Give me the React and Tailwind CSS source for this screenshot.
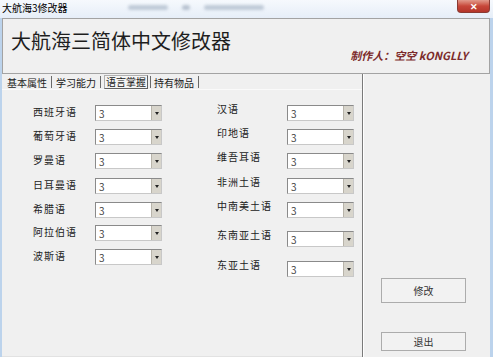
import React from 'react';

const LEFT = [
  { label: '西班牙语', mt: 15 },
  { label: '葡萄牙语', mt: 8 },
  { label: '罗曼语', mt: 8 },
  { label: '日耳曼语', mt: 9 },
  { label: '希腊语', mt: 8 },
  { label: '阿拉伯语', mt: 7 },
  { label: '波斯语', mt: 8 },
];

const RIGHT = [
  { label: '汉语', mt: 15 },
  { label: '印地语', mt: 8 },
  { label: '维吾耳语', mt: 8 },
  { label: '非洲土语', mt: 9 },
  { label: '中南美土语', mt: 8 },
  { label: '东南亚土语', mt: 13 },
  { label: '东亚土语', mt: 14 },
];

const TABS = ['基本属性', '学习能力', '语言掌握', '持有物品'];

const font = { fontFamily: '"Noto Sans CJK SC", "Liberation Sans", sans-serif' };

function Combo() {
  return (
    <div className="w-[67px] h-[16px] flex border border-t-[#8a8a8a] border-l-[#8a8a8a] border-r-[#c8c8c8] border-b-[#c8c8c8] bg-white">
      <div className="flex-1 pl-[3px] text-[10px] leading-[15px] text-[#444]">3</div>
      <div className="w-[10px] h-full bg-[#d8d5cc] border-l border-[#b8b4aa] flex items-center justify-center">
        <div className="w-0 h-0 border-l-[2px] border-r-[2px] border-t-[3px] border-l-transparent border-r-transparent border-t-[#222]" />
      </div>
    </div>
  );
}

function Row({ label, mt, labelW, up }) {
  return (
    <div className="flex items-start" style={{ marginTop: mt }}>
      <div className={`${labelW} text-[10px] leading-[12px] text-[#222] tracking-[1px]`} style={{ marginTop: up }}>{label}</div>
      <Combo />
    </div>
  );
}

export default function App() {
  return (
    <div className="w-[493px] h-[357px] overflow-hidden bg-[#bcd3ec] flex flex-col" style={font}>
      {/* title bar */}
      <div className="h-[18px] flex-none relative bg-gradient-to-b from-[#f6f9fd] to-[#e6eef8] flex items-start">
        <div className="pl-[2px] pt-[2px] text-[10px] leading-[12px] text-black">大航海3修改器</div>
        <div className="ml-[60px] mt-[5px] flex gap-[14px] blur-[1.5px] opacity-50">
          <div className="w-[40px] h-[5px] bg-[#8fa0b4] rounded" />
          <div className="w-[8px] h-[5px] bg-[#7f8fa4] rounded" />
          <div className="w-[60px] h-[5px] bg-[#8fa0b4] rounded" />
        </div>
        <div className="absolute right-[3px] top-0 w-[33px] h-[13px] rounded-b-[4px] bg-gradient-to-b from-[#e19a8c] via-[#c7473a] to-[#b4352a] border border-t-0 border-[#8a3a33] flex items-center justify-center text-white text-[9px] leading-[9px] font-bold">✕</div>
      </div>

      <div className="flex-1 flex flex-col ml-[2px] mr-[3px] bg-[#f0f0f0]">
        {/* header */}
        <div className="h-[56px] flex-none border border-[#a3a3a3] bg-[#f0f0f0] flex flex-col">
          <div className="pl-[8px] pt-[10px] text-[20px] leading-[24px] text-[#1e1e1e]">大航海三简体中文修改器</div>
          <div className="self-end pr-[21px] -mt-[4px] text-[11px] leading-[12px] font-bold italic text-[#7c2b2b]">制作人：空空 kONGLLY</div>
        </div>

        <div className="flex-1 flex">
          {/* tab area */}
          <div className="w-[360px] flex flex-col">
            <div className="h-[15px] flex items-end pl-[4px]">
              {TABS.map((t, i) => (
                <div key={t} className="flex items-end h-full">
                  {i === 2 ? (
                    <div className="h-[14px] px-[1px] mt-[1px] border border-t-[#b0b0b0] border-l-[#b0b0b0] border-r-[#606060] border-b-[#606060] bg-[#f4f4f4] text-[10px] leading-[12px] text-[#222]">{t}</div>
                  ) : (
                    <div className="px-[1px] text-[10px] leading-[13px] text-[#222]">{t}</div>
                  )}
                  <div className={`w-px h-[12px] bg-[#6a6a6a] mb-[1px] ${i === 2 ? 'mx-[2px]' : 'mx-[3px]'}`} />
                </div>
              ))}
            </div>
            <div className="flex-1 border-t border-[#fafafa] border-b border-b-[#e2e2e2] flex">
              <div className="w-[186px] pl-[31px] flex flex-col">
                {LEFT.map((r) => (
                  <Row key={r.label} {...r} labelW="w-[62px]" up={1} />
                ))}
              </div>
              <div className="flex-1 pl-[29px] flex flex-col">
                {RIGHT.map((r) => (
                  <Row key={r.label} {...r} labelW="w-[70px]" up={-2} />
                ))}
              </div>
            </div>
          </div>

          {/* right panel */}
          <div className="flex-1 border-l border-[#7a7a7a] shadow-[inset_1px_0_0_#ffffff] flex flex-col pl-[18px]">
            <button className="mt-[204px] w-[85px] h-[25px] border border-[#acacac] bg-[#f2f2f2] text-[10px] text-[#333]">修改</button>
            <button className="mt-[29px] w-[85px] h-[19px] border border-[#acacac] bg-[#f2f2f2] text-[10px] text-[#333] leading-[17px]">退出</button>
          </div>
        </div>
      </div>
    </div>
  );
}
